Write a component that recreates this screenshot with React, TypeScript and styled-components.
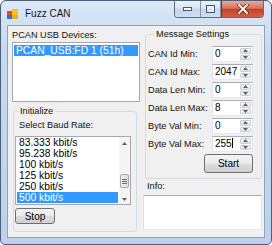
import React from 'react';
import styled, { createGlobalStyle } from 'styled-components';

const GlobalStyle = createGlobalStyle`
  body {
    margin: 0;
    background: #ffffff;
    font-family: 'Liberation Sans', Arial, sans-serif;
  }
`;

const Window = styled.div`
  width: 272px;
  height: 245px;
  box-sizing: border-box;
  display: flex;
  flex-direction: column;
  border: 1px solid #4d5f74;
  border-radius: 6px 6px 5px 5px;
  background: linear-gradient(180deg, #dbe8f7 0%, #c6daf1 20%, #bcd2ec 100%);
  overflow: hidden;
`;

const TitleBar = styled.div`
  height: 24px;
  flex-shrink: 0;
  display: flex;
  align-items: flex-start;
`;

const AppIcon = styled.svg`
  margin: 8px 0 0 6px;
  width: 11px;
  height: 10px;
`;

const Title = styled.span`
  margin: 6px 0 0 7px;
  font-size: 10px;
  line-height: 14px;
  color: #1a1a1a;
`;

const CaptionButtons = styled.div`
  margin-left: auto;
  margin-right: 7px;
  display: flex;
  height: 16px;
  border: 1px solid #5b6c82;
  border-top: none;
  border-radius: 0 0 4px 4px;
  overflow: hidden;
`;

const CaptionButton = styled.div<{ $w: number; $close?: boolean }>`
  width: ${p => p.$w}px;
  display: flex;
  align-items: center;
  justify-content: center;
  border-left: ${p => (p.$close ? '1px solid #6b3a33' : 'none')};
  border-right: ${p => (p.$close ? 'none' : '1px solid #8497b0')};
  background: ${p =>
    p.$close
      ? 'linear-gradient(180deg, #e9a996 0%, #d8735c 45%, #c2412a 52%, #d0603f 100%)'
      : 'linear-gradient(180deg, #eaf1fa 0%, #d9e5f3 45%, #c4d6ec 52%, #d0dff1 100%)'};
  &:last-child {
    border-right: none;
  }
`;

const Client = styled.div`
  flex: 1;
  margin: 0 6px 6px 6px;
  border: 1px solid #8ea3bd;
  background: #f0f0f0;
  display: grid;
  grid-template-columns: 128px 119px;
  column-gap: 3px;
  padding: 0 2px 0 4px;
  align-items: start;
  color: #000;
`;

const Column = styled.div`
  display: flex;
  flex-direction: column;
  align-items: flex-start;
`;

const Label = styled.span<{ $top?: number; $left?: number }>`
  display: block;
  margin-top: ${p => p.$top ?? 0}px;
  padding-left: ${p => p.$left ?? 0}px;
  font-size: 9.2px;
  line-height: 11px;
  white-space: nowrap;
  color: #111;
`;

const ListBox = styled.div<{ $w: number; $h: number; $top: number; $left?: number }>`
  width: ${p => p.$w}px;
  height: ${p => p.$h}px;
  margin-top: ${p => p.$top}px;
  margin-left: ${p => p.$left ?? 0}px;
  box-sizing: border-box;
  border: 1px solid #a4a9b1;
  background: #ffffff;
  display: flex;
  overflow: hidden;
`;

const Items = styled.div<{ $pad: number }>`
  flex: 1;
  padding: ${p => p.$pad}px 1px 0 1px;
  display: flex;
  flex-direction: column;
`;

const Item = styled.div<{ $selected?: boolean }>`
  height: 11px;
  line-height: 11px;
  font-size: 10.3px;
  padding-left: 2px;
  white-space: nowrap;
  color: ${p => (p.$selected ? '#ffffff' : '#000000')};
  background: ${p => (p.$selected ? '#3399ff' : 'transparent')};
`;

const ScrollBar = styled.div`
  width: 11px;
  display: flex;
  flex-direction: column;
  align-items: center;
  background: #f4f4f4;
  padding: 5px 0 3px;
  box-sizing: border-box;
`;

const Thumb = styled.div`
  width: 9px;
  height: 14px;
  margin: 29px 0 auto;
  box-sizing: border-box;
  border: 1px solid #a5a9ae;
  border-radius: 2px;
  background: linear-gradient(90deg, #f1f1f1, #dcdcdc);
  display: flex;
  flex-direction: column;
  align-items: center;
  justify-content: center;
  gap: 1px;
`;

const Grip = styled.div`
  width: 5px;
  height: 1px;
  background: #6e6e6e;
`;

const GroupBox = styled.fieldset<{ $w: number; $top: number; $left: number; $bottom: number }>`
  width: ${p => p.$w}px;
  margin: ${p => p.$top}px 0 0 ${p => p.$left}px;
  padding: 0 0 ${p => p.$bottom}px 0;
  box-sizing: border-box;
  border: 1px solid #d2dce3;
  border-radius: 3px;
  min-width: 0;
  display: flex;
  flex-direction: column;
  align-items: flex-start;
`;

const Legend = styled.legend<{ $left: number }>`
  padding: 0 2px;
  margin-left: ${p => p.$left}px;
  font-size: 9.2px;
  line-height: 11px;
  white-space: nowrap;
  color: #111;
`;

const PushButton = styled.button<{ $w: number; $h: number; $top: number }>`
  width: ${p => p.$w}px;
  height: ${p => p.$h}px;
  margin-top: ${p => p.$top}px;
  padding: 0;
  box-sizing: border-box;
  border: 1px solid #707070;
  border-radius: 3px;
  background: linear-gradient(180deg, #f3f3f3 0%, #ebebeb 48%, #dddddd 52%, #d0d0d0 100%);
  font-family: 'Liberation Sans', Arial, sans-serif;
  font-size: 10px;
  color: #000;
`;

const SettingsGrid = styled.div`
  margin-top: 6px;
  padding-left: 2px;
  display: grid;
  grid-template-columns: 64px 41px;
  row-gap: 2px;
  align-items: center;
`;

const SpinBox = styled.div`
  height: 16px;
  box-sizing: border-box;
  border: 1px solid #abadb3;
  border-left-color: #dfe2e8;
  border-right-color: #dfe2e8;
  border-bottom-color: #e3e9ef;
  background: #ffffff;
  display: flex;
  align-items: center;
`;

const SpinValue = styled.span`
  flex: 1;
  padding-left: 2px;
  font-size: 10px;
  line-height: 14px;
`;

const Caret = styled.span`
  display: inline-block;
  width: 1px;
  height: 10px;
  background: #000;
  vertical-align: -1px;
`;

const SpinButtons = styled.div`
  width: 11px;
  height: 12px;
  margin-right: 1px;
  display: flex;
  flex-direction: column;
  gap: 1px;
`;

const SpinHalf = styled.div`
  flex: 1;
  box-sizing: border-box;
  border: 1px solid #c9ced6;
  border-radius: 1px;
  background: linear-gradient(180deg, #f6f8fa, #e2e6ec);
  display: flex;
  align-items: center;
  justify-content: center;
`;

const RightAligned = styled.div`
  align-self: flex-end;
  margin-right: 8px;
`;

const InfoBox = styled.div`
  width: 119px;
  height: 35px;
  margin-top: 3px;
  box-sizing: border-box;
  border: 1px solid #abadb3;
  border-left-color: #dfe2e8;
  border-right-color: #dfe2e8;
  border-bottom-color: #e3e9ef;
  background: #ffffff;
`;

const UpArrow = () => (
  <svg width="5" height="3" viewBox="0 0 5 3">
    <path d="M0 3L2.5 0L5 3Z" fill="#55606e" />
  </svg>
);

const DownArrow = () => (
  <svg width="5" height="3" viewBox="0 0 5 3">
    <path d="M0 0L2.5 3L5 0Z" fill="#55606e" />
  </svg>
);

const Spin = ({ value, caret }: { value: string; caret?: boolean }) => (
  <SpinBox>
    <SpinValue>
      {value}
      {caret && <Caret />}
    </SpinValue>
    <SpinButtons>
      <SpinHalf>
        <UpArrow />
      </SpinHalf>
      <SpinHalf>
        <DownArrow />
      </SpinHalf>
    </SpinButtons>
  </SpinBox>
);

const settings = [
  { label: 'CAN Id Min:', value: '0' },
  { label: 'CAN Id Max:', value: '2047' },
  { label: 'Data Len Min:', value: '0' },
  { label: 'Data Len Max:', value: '8' },
  { label: 'Byte Val Min:', value: '0' },
  { label: 'Byte Val Max:', value: '255', caret: true },
];

const baudRates = ['83.333 kbit/s', '95.238 kbit/s', '100 kbit/s', '125 kbit/s', '250 kbit/s', '500 kbit/s'];

const App: React.FC = () => {
  return (
    <>
      <GlobalStyle />
      <Window>
        <TitleBar>
          <AppIcon viewBox="0 0 11 10">
            <rect x="0" y="2" width="5" height="4" fill="#e2462f" />
            <rect x="5" y="0" width="6" height="6" fill="#f3c21b" />
            <rect x="0" y="6" width="5" height="4" fill="#2f6fd3" />
            <rect x="5" y="6" width="6" height="4" fill="#f0a830" />
          </AppIcon>
          <Title>Fuzz CAN</Title>
          <CaptionButtons>
            <CaptionButton $w={25}>
              <svg width="9" height="4" viewBox="0 0 9 4">
                <rect x="0.5" y="0.5" width="8" height="3" fill="#ffffff" stroke="#4a5a6e" strokeWidth="1" />
              </svg>
            </CaptionButton>
            <CaptionButton $w={19}>
              <svg width="9" height="8" viewBox="0 0 9 8">
                <rect x="0.5" y="0.5" width="8" height="7" fill="none" stroke="#4a5a6e" strokeWidth="1" />
                <rect x="2" y="3" width="5" height="3" fill="none" stroke="#ffffff" strokeWidth="1" />
              </svg>
            </CaptionButton>
            <CaptionButton $w={41} $close>
              <svg width="12" height="10" viewBox="0 0 12 10">
                <path d="M2 1L10 9M10 1L2 9" stroke="#5b2418" strokeWidth="3.2" strokeLinecap="square" />
                <path d="M2 1L10 9M10 1L2 9" stroke="#ffffff" strokeWidth="1.8" strokeLinecap="square" />
              </svg>
            </CaptionButton>
          </CaptionButtons>
        </TitleBar>

        <Client>
          <Column>
            <Label $top={4}>PCAN USB Devices:</Label>
            <ListBox $w={128} $h={60} $top={1}>
              <Items $pad={2}>
                <Item $selected>PCAN_USB:FD 1 (51h)</Item>
              </Items>
            </ListBox>

            <GroupBox $w={124} $top={4} $left={1} $bottom={7}>
              <Legend $left={4}>Initialize</Legend>
              <Label $top={3} $left={5}>Select Baud Rate:</Label>
              <ListBox $w={116} $h={69} $top={5} $left={1}>
                <Items $pad={0}>
                  {baudRates.map((rate, i) => (
                    <Item key={rate} $selected={i === baudRates.length - 1}>
                      {rate}
                    </Item>
                  ))}
                </Items>
                <ScrollBar>
                  <UpArrow />
                  <Thumb>
                    <Grip />
                    <Grip />
                    <Grip />
                  </Thumb>
                  <DownArrow />
                </ScrollBar>
              </ListBox>
              <PushButton $w={40} $h={16} $top={3} style={{ marginLeft: 1 }}>
                Stop
              </PushButton>
            </GroupBox>
          </Column>

          <Column>
            <GroupBox $w={117} $top={3} $left={2} $bottom={5}>
              <Legend $left={8}>Message Settings</Legend>
              <SettingsGrid>
                {settings.map(s => (
                  <React.Fragment key={s.label}>
                    <Label>{s.label}</Label>
                    <Spin value={s.value} caret={s.caret} />
                  </React.Fragment>
                ))}
              </SettingsGrid>
              <RightAligned>
                <PushButton $w={49} $h={19} $top={2}>
                  Start
                </PushButton>
              </RightAligned>
            </GroupBox>
            <Label $top={2} $left={4}>Info:</Label>
            <InfoBox />
          </Column>
        </Client>
      </Window>
    </>
  );
};

export default App;
